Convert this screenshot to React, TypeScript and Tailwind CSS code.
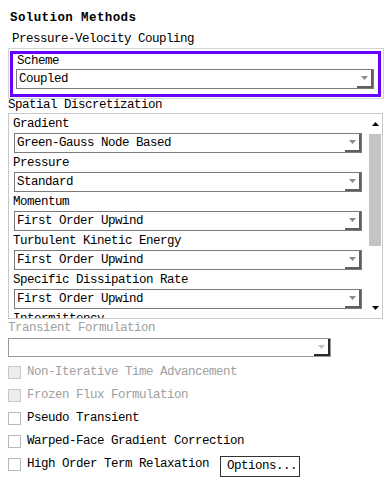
const items = [
  { label: 'Gradient', value: 'Green-Gauss Node Based' },
  { label: 'Pressure', value: 'Standard' },
  { label: 'Momentum', value: 'First Order Upwind' },
  { label: 'Turbulent Kinetic Energy', value: 'First Order Upwind' },
  { label: 'Specific Dissipation Rate', value: 'First Order Upwind' },
  { label: 'Intermittency', value: 'First Order Upwind' },
];

const checks = [
  { label: 'Non-Iterative Time Advancement', disabled: true },
  { label: 'Frozen Flux Formulation', disabled: true },
  { label: 'Pseudo Transient', disabled: false },
  { label: 'Warped-Face Gradient Correction', disabled: false },
];

function Tri({ up = false, color = '#000' }: { up?: boolean; color?: string }) {
  return (
    <svg width="7" height="4" viewBox="0 0 7 4" className="block">
      <path d={up ? 'M0 4 L3.5 0 L7 4 Z' : 'M0 0 L7 0 L3.5 4 Z'} fill={color} />
    </svg>
  );
}

function Combo({ value, className }: { value: string; className: string }) {
  return (
    <div className={`flex h-[20px] bg-white border border-[#7a7a7a] ${className}`}>
      <div className="flex-1 pl-[2px] leading-[18px] whitespace-nowrap overflow-hidden">{value}</div>
      <div className="w-[16px] flex items-center justify-center border-r-2 border-b-2 border-[#5f5f5f]">
        <Tri color="#8a8a8a" />
      </div>
    </div>
  );
}

function Check({ label, disabled }: { label: string; disabled: boolean }) {
  return (
    <div className="flex items-center gap-[6px] h-[23px]">
      <div
        className={`w-[13px] h-[13px] border ${
          disabled ? 'border-[#c8c8c8] bg-[#ededed]' : 'border-[#b8b8b8] bg-white'
        }`}
      />
      <span className={disabled ? 'text-[#a0a0a0]' : 'text-black'}>{label}</span>
    </div>
  );
}

export default function App() {
  return (
    <div className="w-[391px] h-[480px] bg-white overflow-hidden font-['Liberation_Mono',monospace] text-[12.5px] tracking-[-0.5px] text-black">
      <div className="pl-[10px] pt-[9px] h-[27px] leading-[18px] font-bold tracking-[0.4px]">Solution Methods</div>
      <div className="pl-[12px] pt-[3px] h-[21px] leading-[18px]">Pressure-Velocity Coupling</div>

      <div className="ml-[8px] w-[376px] h-[51px] border border-[#d4d4d4] pt-[2px] pl-[1px] pr-[2px]">
        <div className="h-[46px] border-[3px] border-[#6600ff] pl-[3px] pr-[4px]">
          <div className="h-[15px] leading-[15px] pl-[1px]">Scheme</div>
          <Combo value="Coupled" className="w-full" />
        </div>
      </div>

      <div className="pl-[8px] h-[15px] leading-[15px] -mt-[1px]">Spatial Discretization</div>

      <div className="ml-[8px] w-[375px] h-[206px] border border-[#c8c8c8] flex">
        <div className="flex-1 overflow-hidden pt-[1px] pr-[3px]">
          {items.map((it) => (
            <div key={it.label} className="h-[39px]">
              <div className="h-[18px] leading-[18px] pl-[4px]">{it.label}</div>
              <Combo value={it.value} className="ml-[5px]" />
            </div>
          ))}
        </div>
        <div className="w-[17px] flex flex-col">
          <div className="h-[20px] flex items-center justify-center pl-[3px]">
            <Tri up />
          </div>
          <div className="flex-1">
            <div className="ml-[4px] w-[12px] h-[112px] bg-[#c4c4c4]" />
          </div>
          <div className="h-[20px] flex items-center justify-center pl-[3px]">
            <Tri />
          </div>
        </div>
      </div>

      <div className="pl-[8px] h-[19px] leading-[19px] text-[#a0a0a0]">Transient Formulation</div>
      <div className="ml-[8px] w-[323px] h-[19px] flex bg-white border border-[#9a9a9a]">
        <div className="flex-1" />
        <div className="w-[16px] flex items-center justify-center border-r-2 border-b-2 border-[#2a2a2a]">
          <Tri color="#c0c0c0" />
        </div>
      </div>

      <div className="pl-[8px] pt-[4px]">
        {checks.map((c) => (
          <Check key={c.label} label={c.label} disabled={c.disabled} />
        ))}
        <div className="flex items-center h-[23px]">
          <Check label="High Order Term Relaxation" disabled={false} />
          <button className="ml-[11px] mt-[3px] h-[21px] w-[80px] border border-[#333] bg-white text-left pl-[6px] leading-[19px]">
            Options...
          </button>
        </div>
      </div>
    </div>
  );
}
